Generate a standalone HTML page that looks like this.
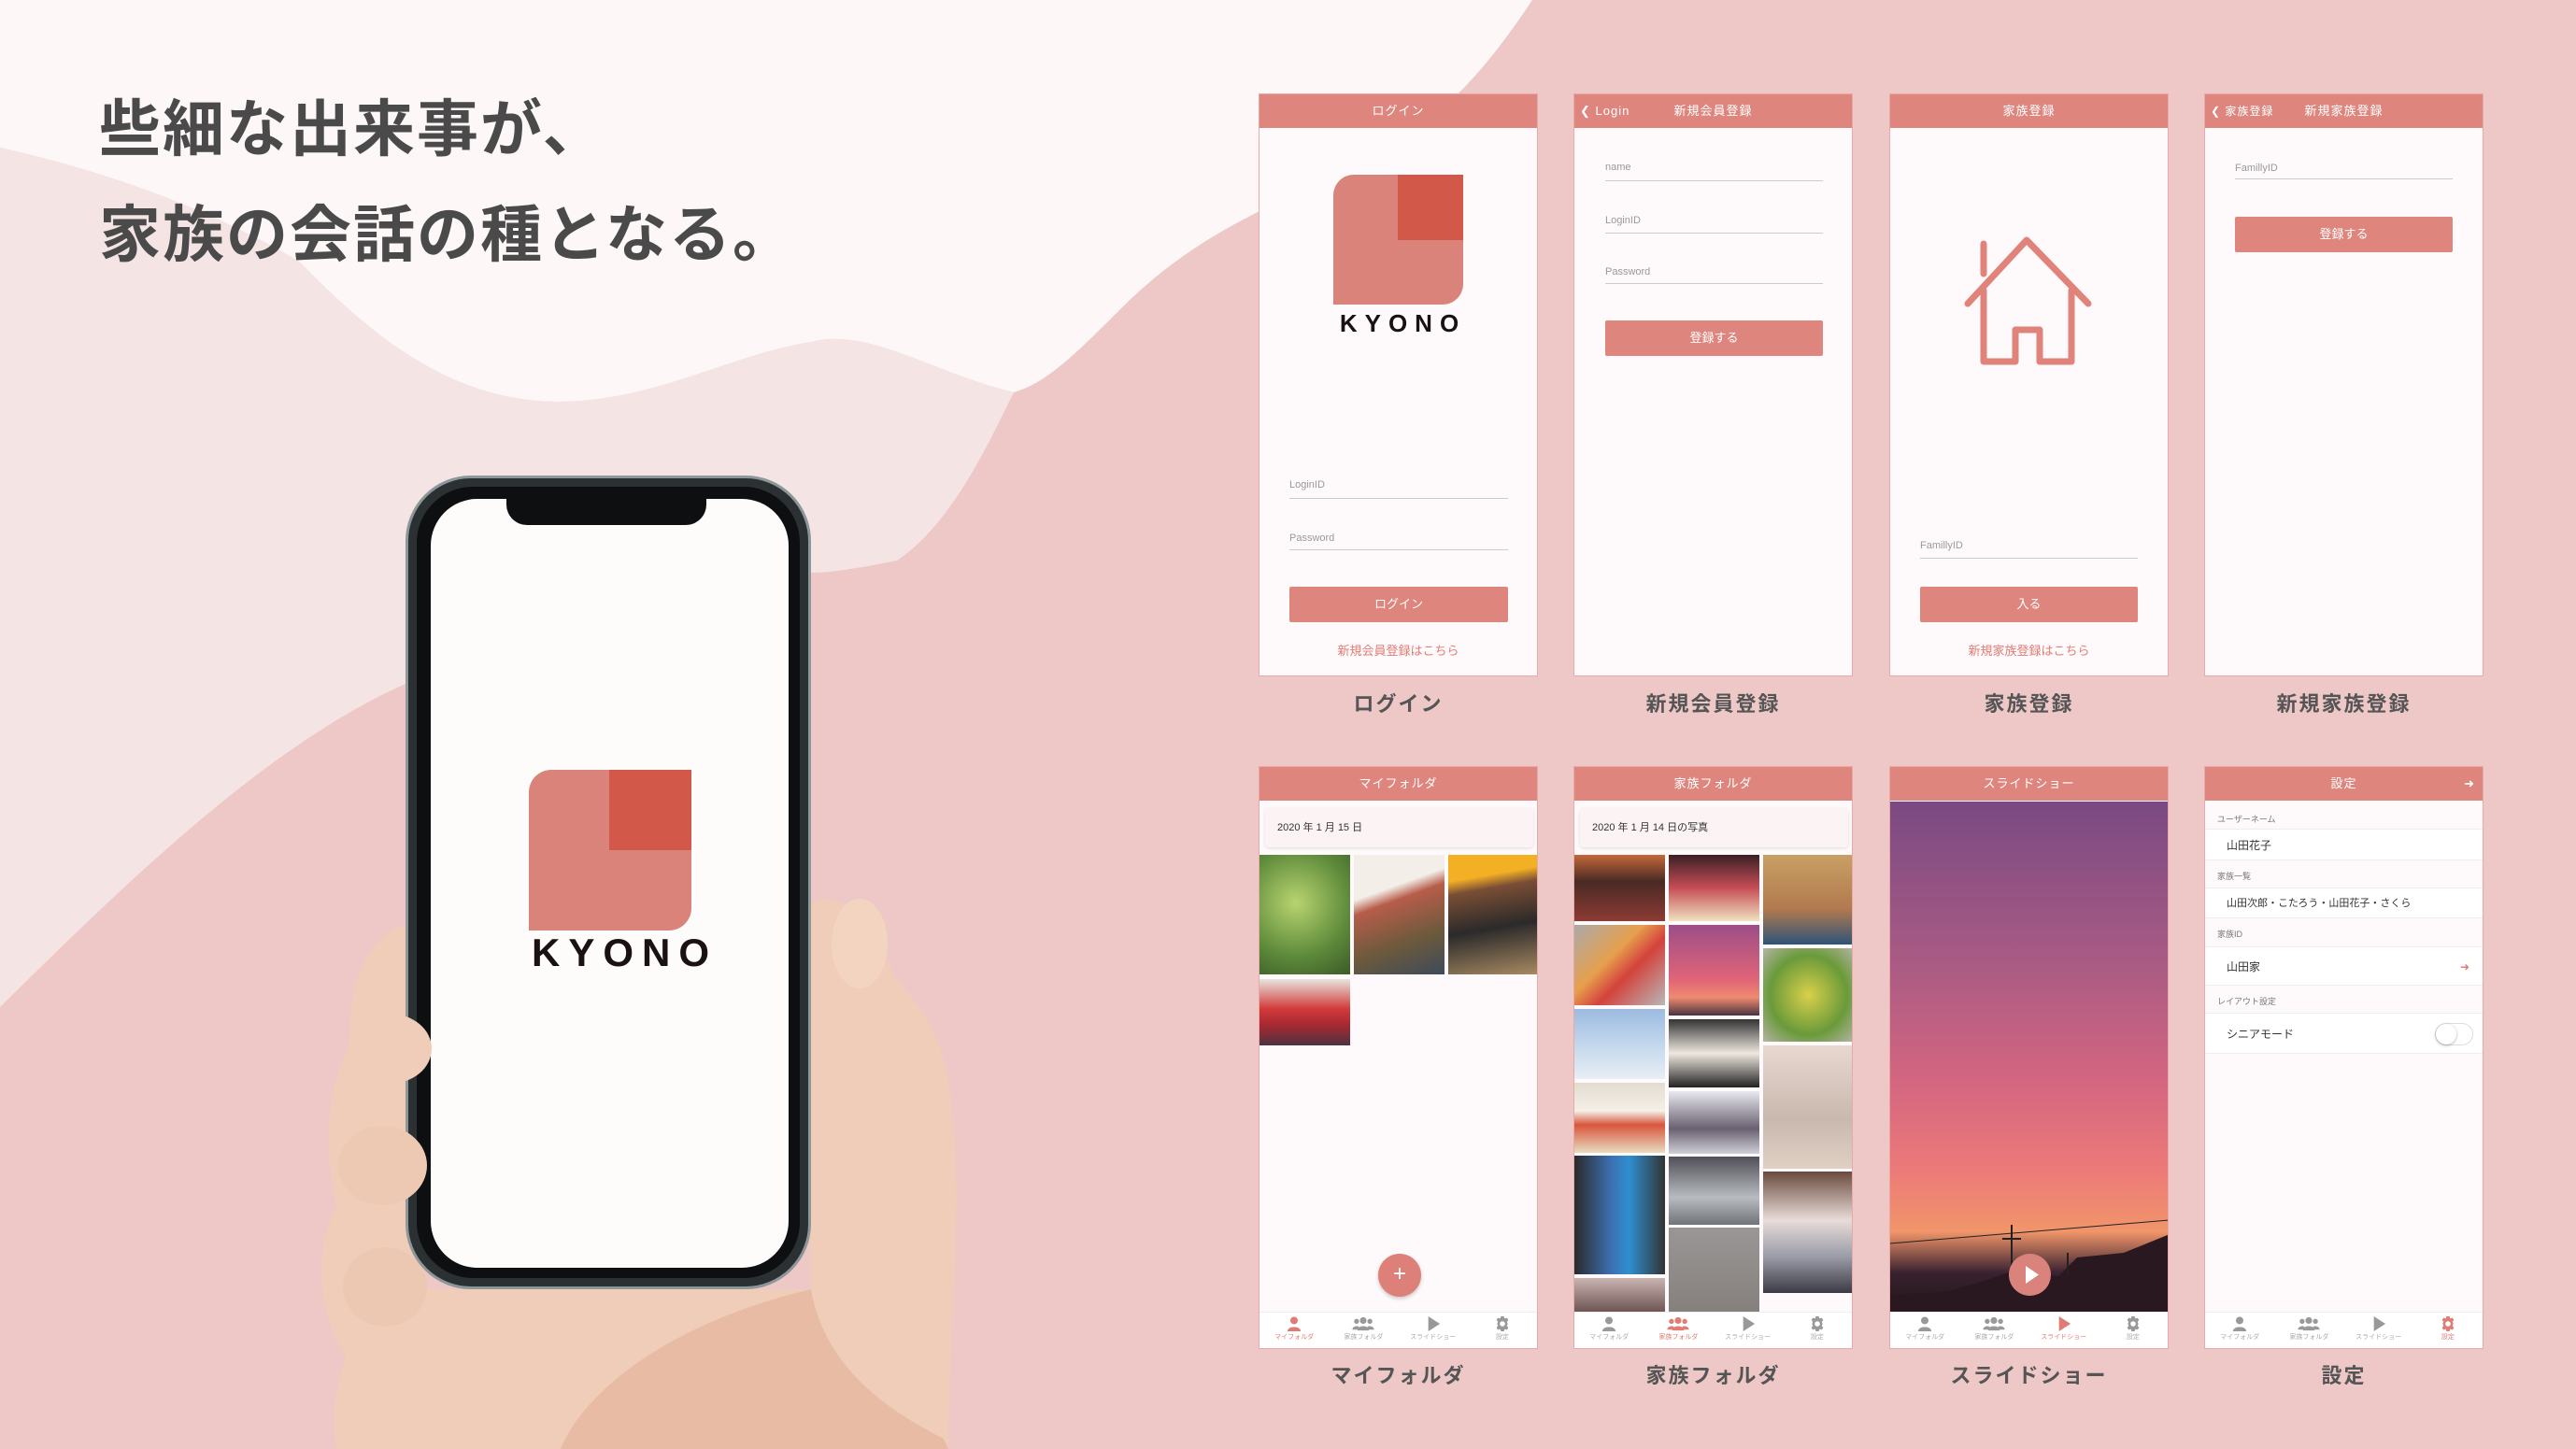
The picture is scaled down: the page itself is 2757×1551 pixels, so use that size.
<!DOCTYPE html>
<html><head><meta charset="utf-8">
<style>
*{margin:0;padding:0;box-sizing:border-box}
body{width:2757px;height:1551px;overflow:hidden;position:relative;background:#eec7c7;font-family:"Liberation Sans","Noto Sans CJK JP",sans-serif}
.abs{position:absolute}
.scr{position:absolute;width:299px;background:#fefafb;border:1px solid #e7aaa7;overflow:hidden}
.hd{position:absolute;left:0;top:0;width:100%;height:36px;background:#de867e;color:#fff;font-size:13px;text-align:center;line-height:36px;letter-spacing:1px}
.lbl{position:absolute;width:299px;text-align:center;font-size:22px;font-weight:bold;color:#555;letter-spacing:2px}
.fl{position:absolute;font-size:11px;color:#999}
.ln{position:absolute;height:1px;background:#ccc}
.btn{position:absolute;background:#de867e;color:#fff;font-size:13px;text-align:center;border-radius:2px}
.lk{position:absolute;width:100%;text-align:center;font-size:13px;color:#e07c74}
.tab{position:absolute;left:0;bottom:0;width:100%;height:39px;background:#fff;border-top:1px solid #eee;display:flex}
.tab div{flex:1;text-align:center;font-size:7px;color:#aaa;position:relative}
.tab svg{display:block;margin:4px auto 1px}
.tab .on{color:#e07c74}
.ph{position:absolute}
.sl{position:absolute;left:13px;font-size:9px;color:#777}
.sr{position:absolute;left:0;width:100%;background:#fff;font-size:12px;color:#333;padding-left:23px;border-top:1px solid #eee;border-bottom:1px solid #eee}
</style></head><body>
<svg class="abs" style="left:0;top:0" width="2757" height="1551">
<path d="M0 0 H1640 C1600 60 1560 110 1500 150 C1400 210 1300 230 1200 330 C1150 380 1120 410 1085 420 C1000 400 930 350 868 366 C780 380 700 430 597 430 C470 430 380 340 320 280 C220 220 100 180 0 158 Z" fill="#fdf7f7"/>
<path d="M0 158 C100 180 220 220 320 280 C380 340 470 430 597 430 C700 430 780 380 868 366 C930 350 1000 400 1085 420 C1060 470 1020 560 960 600 C900 612 880 613 868 613 C700 640 560 680 434 732 C280 800 120 960 0 1078 Z" fill="#f5e4e4"/>
<path d="M455 985 C400 990 370 1040 375 1120 C350 1160 345 1230 360 1290 C335 1340 340 1410 370 1450 C355 1500 355 1530 360 1551 L1015 1551 C1015 1450 1030 1300 1020 1200 C1015 1130 1000 1090 960 1050 C940 1000 910 960 880 962 C860 965 850 990 860 1030 L868 1380 L455 1380 Z" fill="#efcdb8"/>
<path d="M868 1380 C880 1450 930 1500 1010 1540 L1015 1551 L600 1551 C620 1500 700 1420 868 1380 Z" fill="#e8bca4"/>
<ellipse cx="920" cy="1010" rx="30" ry="48" fill="#f3d4c0"/>
</svg>
<div class="abs" style="left:434px;top:509px;width:434px;height:871px;border-radius:70px;background:#2b3133;border:3px solid #8d9699"></div>
<div class="abs" style="left:446px;top:521px;width:410px;height:847px;border-radius:60px;background:#0d0f10"></div>
<div class="abs" style="left:461px;top:534px;width:383px;height:823px;border-radius:50px;background:#fefbfb"></div>
<div class="abs" style="left:542px;top:530px;width:214px;height:32px;border-radius:0 0 22px 22px;background:#0d0f10"></div>
<div class="abs" style="left:566px;top:824px;width:174px;height:172px;background:#da837b;border-radius:24px 0 24px 0"></div>
<div class="abs" style="left:652px;top:824px;width:88px;height:86px;background:#d25849"></div>
<div class="abs" style="left:560px;top:996px;width:186px;text-align:center;font-size:42px;font-weight:bold;letter-spacing:9px;color:#1a1212;padding-left:9px">KYONO</div>
<div class="abs" style="left:372px;top:1085px;width:90px;height:75px;border-radius:50%;background:#efcdb8"></div>
<div class="abs" style="left:362px;top:1205px;width:95px;height:85px;border-radius:50%;background:#edc9b3"></div>
<div class="abs" style="left:367px;top:1335px;width:90px;height:85px;border-radius:50%;background:#ecc7b1"></div>
<div class="abs" style="left:106px;top:82px;font-size:66px;font-weight:bold;color:#4a4a4a;letter-spacing:2px;line-height:113px">些細な出来事が、<br>家族の会話の種となる。</div>

<div class="scr" style="left:1347px;top:100px;height:624px">
<div class="hd">ログイン</div>
<div class="abs" style="left:79px;top:86px;width:139px;height:139px;background:#da837b;border-radius:22px 0 22px 0"></div>
<div class="abs" style="left:148px;top:86px;width:70px;height:70px;background:#d25849"></div>
<div class="abs" style="left:40px;top:230px;width:219px;text-align:center;font-size:26px;font-weight:bold;letter-spacing:8px;color:#1a1212;padding-left:8px">KYONO</div>
<div class="fl" style="left:32px;top:412px">LoginID</div><div class="ln" style="left:32px;top:432px;width:234px"></div>
<div class="fl" style="left:32px;top:469px">Password</div><div class="ln" style="left:32px;top:487px;width:234px"></div>
<div class="btn" style="left:32px;top:527px;width:234px;height:38px;line-height:38px">ログイン</div>
<div class="lk" style="top:585px">新規会員登録はこちら</div>
</div>
<div class="lbl" style="left:1347px;top:736px">ログイン</div>

<div class="scr" style="left:1684px;top:100px;height:624px">
<div class="hd"><span class="abs" style="left:6px;top:0">❮ Login</span>新規会員登録</div>
<div class="fl" style="left:33px;top:72px">name</div><div class="ln" style="left:33px;top:92px;width:233px"></div>
<div class="fl" style="left:33px;top:129px">LoginID</div><div class="ln" style="left:33px;top:148px;width:233px"></div>
<div class="fl" style="left:33px;top:184px">Password</div><div class="ln" style="left:33px;top:202px;width:233px"></div>
<div class="btn" style="left:33px;top:242px;width:233px;height:38px;line-height:38px">登録する</div>
</div>
<div class="lbl" style="left:1684px;top:736px">新規会員登録</div>

<div class="scr" style="left:2022px;top:100px;height:624px">
<div class="hd">家族登録</div>
<svg class="abs" style="left:78px;top:152px" width="140" height="138" viewBox="0 0 140 138"><g fill="none" stroke="#df837b" stroke-width="7" stroke-linejoin="round" stroke-linecap="round"><path d="M5 72 L68 4 L134 72"/><path d="M22 8 V40"/><path d="M22 58 V134 H56 V100 H82 V134 H116 V58"/></g></svg>
<div class="fl" style="left:32px;top:477px">FamillyID</div><div class="ln" style="left:32px;top:496px;width:233px"></div>
<div class="btn" style="left:32px;top:527px;width:233px;height:38px;line-height:38px">入る</div>
<div class="lk" style="top:585px">新規家族登録はこちら</div>
</div>
<div class="lbl" style="left:2022px;top:736px">家族登録</div>

<div class="scr" style="left:2359px;top:100px;height:624px">
<div class="hd"><span class="abs" style="left:6px;top:0;font-size:12px">❮ 家族登録</span><span>新規家族登録</span></div>
<div class="fl" style="left:32px;top:73px">FamillyID</div><div class="ln" style="left:32px;top:90px;width:233px"></div>
<div class="btn" style="left:32px;top:131px;width:233px;height:38px;line-height:38px">登録する</div>
</div>
<div class="lbl" style="left:2359px;top:736px">新規家族登録</div>

<svg width="0" height="0" style="position:absolute"><defs>
<symbol id="ip" viewBox="0 0 20 18"><circle cx="10" cy="5" r="4.5"/><path d="M2 18 C2 11 18 11 18 18 Z"/></symbol>
<symbol id="ig" viewBox="0 0 26 18"><circle cx="13" cy="5" r="4"/><circle cx="5" cy="6" r="3"/><circle cx="21" cy="6" r="3"/><path d="M6 17 C6 10 20 10 20 17 Z"/><path d="M0 16 C0 11 8 11 8 13 L6 16 Z"/><path d="M26 16 C26 11 18 11 18 13 L20 16 Z"/></symbol>
<symbol id="iy" viewBox="0 0 18 18"><path d="M3 0 L17 9 L3 18 Z"/></symbol>
<symbol id="is" viewBox="0 0 20 20"><path d="M8 0h4l1 3 3-1 2 3-2 2 1 3-1 3 2 2-2 3-3-1-1 3h-4l-1-3-3 1-2-3 2-2-1-3 1-3-2-2 2-3 3 1z"/><circle cx="10" cy="10" r="3.5" fill="#fff"/></symbol>
</defs></svg>

<div class="scr" style="left:1347px;top:820px;height:624px">
<div class="hd">マイフォルダ</div>
<div class="abs" style="left:6px;top:44px;width:287px;height:42px;background:#fcf3f4;border-radius:4px;box-shadow:0 1px 3px rgba(0,0,0,.12);font-size:11px;color:#333;line-height:42px;padding-left:13px">2020 年 1 月 15 日</div>
<div class="ph" style="left:0;top:94px;width:97px;height:128px;background:radial-gradient(circle at 40% 40%,#b8d470,#5d8a3a 60%,#3b5a28)"></div>
<div class="ph" style="left:101px;top:94px;width:97px;height:128px;background:linear-gradient(160deg,#f3efe8 0 30%,#b75d4a 40%,#6d5a3c 70%,#3e4a5a)"></div>
<div class="ph" style="left:202px;top:94px;width:97px;height:128px;background:linear-gradient(170deg,#f4b025 0 20%,#7a4e35 30%,#2b2a2a 60%,#a88a62)"></div>
<div class="ph" style="left:0;top:227px;width:97px;height:71px;background:linear-gradient(180deg,#e8e4dd,#d23a3a 45%,#a52830 70%,#4e3340)"></div>
<div class="abs" style="left:127px;top:521px;width:46px;height:46px;border-radius:50%;background:#de807a;color:#fff;font-size:24px;text-align:center;line-height:44px;box-shadow:0 2px 4px rgba(0,0,0,.2)">+</div>
<div class="tab"><div class="on"><svg width="18" height="16" fill="#e07c74"><use href="#ip"/></svg>マイフォルダ</div><div><svg width="24" height="16" fill="#999"><use href="#ig"/></svg>家族フォルダ</div><div><svg width="16" height="16" fill="#999"><use href="#iy"/></svg>スライドショー</div><div><svg width="16" height="16" fill="#999"><use href="#is"/></svg>設定</div></div>
</div>
<div class="lbl" style="left:1347px;top:1455px">マイフォルダ</div>

<div class="scr" style="left:1684px;top:820px;height:624px">
<div class="hd">家族フォルダ</div>
<div class="abs" style="left:6px;top:44px;width:287px;height:42px;background:#fcf3f4;border-radius:4px;box-shadow:0 1px 3px rgba(0,0,0,.12);font-size:11px;color:#333;line-height:42px;padding-left:13px">2020 年 1 月 14 日の写真</div>
<div class="ph" style="left:0;top:94px;width:97px;height:71px;background:linear-gradient(#c4683a,#4a2a24 40%,#8c3b34)"></div>
<div class="ph" style="left:0;top:169px;width:97px;height:86px;background:linear-gradient(135deg,#aaa,#e6a04d 40%,#d3423c 60%,#b8b8b8)"></div>
<div class="ph" style="left:0;top:259px;width:97px;height:75px;background:linear-gradient(#9dbbe0,#c9dcee 60%,#e8eef5)"></div>
<div class="ph" style="left:0;top:338px;width:97px;height:75px;background:linear-gradient(#e2dcd0,#f5f0e8 40%,#d8553c 60%,#e8dcc0)"></div>
<div class="ph" style="left:0;top:416px;width:97px;height:127px;background:linear-gradient(90deg,#2a2a2a,#3c6fb0 40%,#2f8fd0 60%,#333)"></div>
<div class="ph" style="left:0;top:547px;width:97px;height:38px;background:linear-gradient(#c8b4b0,#6a5050)"></div>
<div class="ph" style="left:101px;top:94px;width:97px;height:71px;background:linear-gradient(#3a2024,#c74d56 50%,#f0e2c0)"></div>
<div class="ph" style="left:101px;top:169px;width:97px;height:97px;background:linear-gradient(#9c4e88,#e06478 60%,#f08a70 80%,#4a3440)"></div>
<div class="ph" style="left:101px;top:270px;width:97px;height:73px;background:linear-gradient(#333,#efe8e0 50%,#222)"></div>
<div class="ph" style="left:101px;top:347px;width:97px;height:67px;background:linear-gradient(#e8e8ef,#6a6070 60%,#cfd0d8)"></div>
<div class="ph" style="left:101px;top:417px;width:97px;height:73px;background:linear-gradient(#505058,#b8bcc0 60%,#707478)"></div>
<div class="ph" style="left:101px;top:493px;width:97px;height:92px;background:linear-gradient(#9a9696,#85807c)"></div>
<div class="ph" style="left:202px;top:94px;width:97px;height:96px;background:linear-gradient(#c8a064,#b27a4e 60%,#2e5478)"></div>
<div class="ph" style="left:202px;top:194px;width:97px;height:100px;background:radial-gradient(#d8d04a,#6a9a3a 60%,#b4b4a4)"></div>
<div class="ph" style="left:202px;top:298px;width:97px;height:132px;background:linear-gradient(#e8d8d0,#c8b8ae 60%,#e0d0c4)"></div>
<div class="ph" style="left:202px;top:433px;width:97px;height:130px;background:linear-gradient(#6a4a3e,#e8dcd8 40%,#9a9ca8 70%,#3c3a44)"></div>
<div class="tab"><div><svg width="18" height="16" fill="#999"><use href="#ip"/></svg>マイフォルダ</div><div class="on"><svg width="24" height="16" fill="#e07c74"><use href="#ig"/></svg>家族フォルダ</div><div><svg width="16" height="16" fill="#999"><use href="#iy"/></svg>スライドショー</div><div><svg width="16" height="16" fill="#999"><use href="#is"/></svg>設定</div></div>
</div>
<div class="lbl" style="left:1684px;top:1455px">家族フォルダ</div>

<div class="scr" style="left:2022px;top:820px;height:624px">
<div class="hd">スライドショー</div>
<div class="ph" style="left:0;top:37px;width:299px;height:548px;background:linear-gradient(180deg,#7a4a82 0%,#a75a84 30%,#d46680 55%,#ec7a78 72%,#f1956a 84%,#3a2230 92%,#1e1418 100%)"></div>
<svg class="abs" style="left:0;top:470px" width="299" height="115"><path d="M0 110 L0 95 L60 92 L100 80 L130 70 L180 75 L200 55 L250 50 L299 30 L299 115 L0 115Z" fill="#2a1820"/><path d="M0 40 L299 15" stroke="#222" stroke-width="1"/><path d="M130 20 V70 M120 35 H140 M160 60 V90 M190 50 V75" stroke="#222" stroke-width="2"/></svg>
<div class="abs" style="left:127px;top:521px;width:45px;height:45px;border-radius:50%;background:#d9837c"><svg width="45" height="45"><path d="M18 13 L32 22.5 L18 32Z" fill="#fff"/></svg></div>
<div class="tab"><div><svg width="18" height="16" fill="#999"><use href="#ip"/></svg>マイフォルダ</div><div><svg width="24" height="16" fill="#999"><use href="#ig"/></svg>家族フォルダ</div><div class="on"><svg width="16" height="16" fill="#e07c74"><use href="#iy"/></svg>スライドショー</div><div><svg width="16" height="16" fill="#999"><use href="#is"/></svg>設定</div></div>
</div>
<div class="lbl" style="left:2022px;top:1455px">スライドショー</div>

<div class="scr" style="left:2359px;top:820px;height:624px">
<div class="hd">設定<span class="abs" style="right:8px;top:0;font-size:13px">➜</span></div>
<div class="sl" style="top:49px">ユーザーネーム</div>
<div class="sr" style="top:66px;height:34px;line-height:34px">山田花子</div>
<div class="sl" style="top:110px">家族一覧</div>
<div class="sr" style="top:129px;height:33px;line-height:33px;font-size:11px">山田次郎・こたろう・山田花子・さくら</div>
<div class="sl" style="top:172px">家族ID</div>
<div class="sr" style="top:192px;height:42px;line-height:42px">山田家<span class="abs" style="right:14px;top:0;color:#e07c74;font-size:12px">➜</span></div>
<div class="sl" style="top:244px">レイアウト設定</div>
<div class="sr" style="top:263px;height:44px;line-height:44px">シニアモード<span class="abs" style="right:10px;top:10px;width:41px;height:24px;border-radius:12px;border:1px solid #ddd;background:#fff"><span class="abs" style="left:0;top:0;width:22px;height:22px;border-radius:50%;background:#fff;box-shadow:0 1px 3px rgba(0,0,0,.3)"></span></span></div>
<div class="tab"><div><svg width="18" height="16" fill="#999"><use href="#ip"/></svg>マイフォルダ</div><div><svg width="24" height="16" fill="#999"><use href="#ig"/></svg>家族フォルダ</div><div><svg width="16" height="16" fill="#999"><use href="#iy"/></svg>スライドショー</div><div class="on"><svg width="16" height="16" fill="#e07c74"><use href="#is"/></svg>設定</div></div>
</div>
<div class="lbl" style="left:2359px;top:1455px">設定</div>
</body></html>
